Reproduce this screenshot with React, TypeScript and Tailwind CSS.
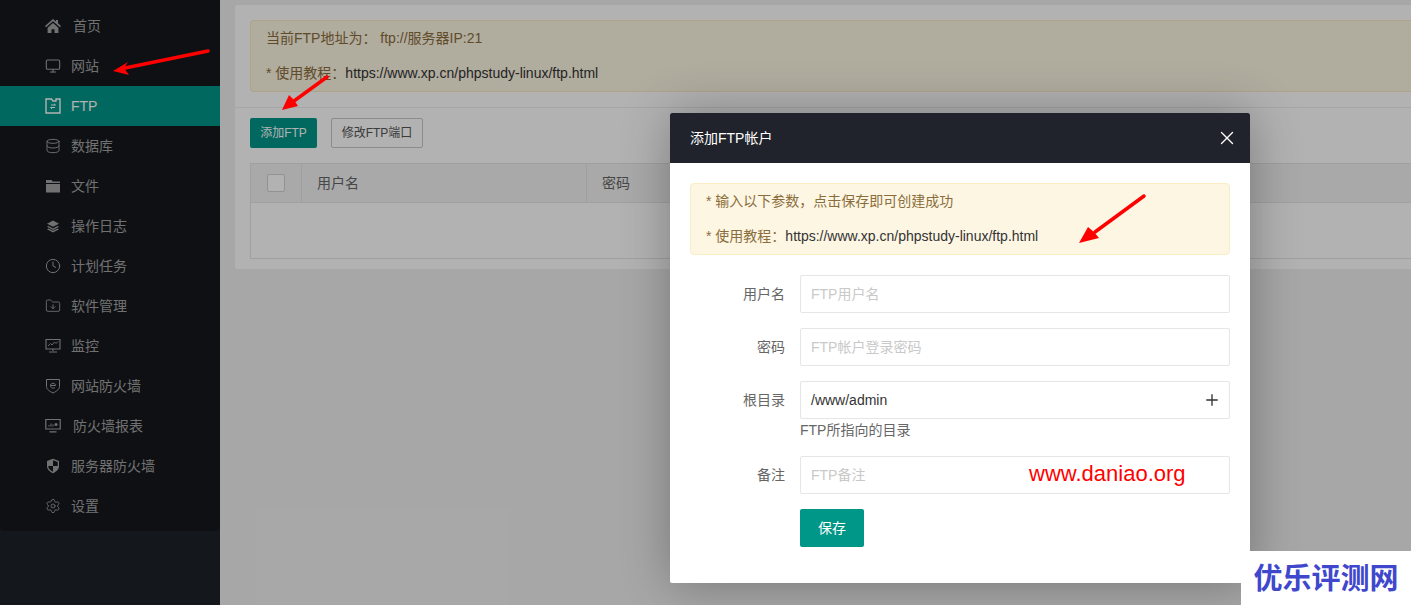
import { Clock, Database, FolderDown, Monitor, Plus, Settings, X } from "lucide-react";
import type { ReactNode } from "react";

const iconCls = "h-[16px] w-[16px]";

function HomeIcon() {
  return (
    <svg viewBox="0 0 16 16" className={iconCls} fill="currentColor">
      <path d="M8 1 0 8l1 1.200L8 3.200l7 6 1-1.200L13 5.300V2h-2v1.600zM2.600 9.800V15h3.900v-3.800h3V15h3.900V9.800L8 5z" />
    </svg>
  );
}

function FtpIcon() {
  return (
    <svg viewBox="0 0 16 16" className={iconCls} fill="none" stroke="currentColor" strokeWidth="1.400">
      <path d="M1 1h5.500l1.500 2h3V1h4v14H1z" />
      <path d="M6 7h4.500L9 5.800M10 9.500H5.500L7 10.800" strokeWidth="1" />
    </svg>
  );
}

function FolderIcon() {
  return (
    <svg viewBox="0 0 16 16" className={iconCls} fill="currentColor">
      <path d="M1 2h5.500l1.200 1.500H15v1.500H1zM1 6h14v8.500H1z" />
    </svg>
  );
}

function LayersIcon() {
  return (
    <svg viewBox="0 0 16 16" className={iconCls} fill="currentColor">
      <path d="M8 2.500 14 5.700 8 8.800 2 5.700zM3.400 8 8 10.400 12.600 8 14 8.800 8 12 2 8.800zM3.400 10.400 8 12.800l4.600-2.400 1.400 .8L8 14.400 2 11.200z" />
    </svg>
  );
}

function ChartIcon() {
  return (
    <svg viewBox="0 0 16 16" className={iconCls} fill="none" stroke="currentColor" strokeWidth="1.100">
      <path d="M1 1.500h14v9.500H1zM8 11v2M4 14h8" />
      <path d="M3 8l2.500-2.500 1.500 1.500 2.500-3 1.500 1.500 2-2" strokeWidth=".9" />
    </svg>
  );
}

function ShieldEIcon() {
  return (
    <svg viewBox="0 0 16 16" className={iconCls} fill="none" stroke="currentColor" strokeWidth="1">
      <path d="M1.500 1.500h13v7c0 3-3.500 5-6.500 6.500-3-1.500-6.500-3.500-6.500-6.500z" />
      <path d="M5.500 7.500h5c0-3-5-3-5 0s3 3 4.500 2" />
    </svg>
  );
}

function ReportIcon() {
  return (
    <svg viewBox="0 0 16 16" className={iconCls} fill="none" stroke="currentColor" strokeWidth="1.200">
      <path d="M.8 1.500h14.400v9.500H.8zM4.500 13.800h7" />
      <path d="M4 8.500V7M6 8.500V5.500M8 8.500V6.500" strokeWidth="1" />
      <circle cx="11" cy="6.500" r="1.500" fill="currentColor" stroke="none" />
    </svg>
  );
}

function ShieldHalfIcon() {
  return (
    <svg viewBox="0 0 16 16" className={iconCls} fill="currentColor">
      <path d="M8 .8 14 3v5.500c0 3-3 5.300-6 6.700-3-1.400-6-3.700-6-6.700V3zM8 2.300V8H3.300v.5c0 2.300 2.400 4.200 4.700 5.300V8h4.700V3.900z" />
    </svg>
  );
}

type NavItem = { label: string; icon: ReactNode; active?: boolean; shift?: boolean };

const navItems: NavItem[] = [
  { label: "首页", icon: <HomeIcon />, shift: true },
  { label: "网站", icon: <Monitor className={iconCls} strokeWidth={1.6} /> },
  { label: "FTP", icon: <FtpIcon />, active: true },
  { label: "数据库", icon: <Database className={iconCls} strokeWidth={1.4} /> },
  { label: "文件", icon: <FolderIcon /> },
  { label: "操作日志", icon: <LayersIcon /> },
  { label: "计划任务", icon: <Clock className={iconCls} strokeWidth={1.5} /> },
  { label: "软件管理", icon: <FolderDown className={iconCls} strokeWidth={1.3} /> },
  { label: "监控", icon: <ChartIcon /> },
  { label: "网站防火墙", icon: <ShieldEIcon /> },
  { label: "防火墙报表", icon: <ReportIcon />, shift: true },
  { label: "服务器防火墙", icon: <ShieldHalfIcon /> },
  { label: "设置", icon: <Settings className={iconCls} strokeWidth={1.3} /> },
];

function Field({ label, placeholder, value, suffix, hint, watermark }: {
  label: string;
  placeholder?: string;
  value?: string;
  suffix?: boolean;
  hint?: string;
  watermark?: boolean;
}) {
  return (
    <div className="flex">
      <div className="flex h-[38px] w-[95px] shrink-0 items-center justify-end text-[14px] text-[#666]">{label}</div>
      <div className="ml-[15px] flex-1">
        <div className="relative flex h-[38px] items-center justify-between rounded-[2px] border border-[#e6e6e6] pl-[10px] pr-[8px] text-[14px]">
          {value ? <span className="text-[#333]">{value}</span> : <span className="text-[#c9c9c9]">{placeholder}</span>}
          {suffix && <Plus className="h-[18px] w-[18px] text-[#333]" strokeWidth={1.8} />}
          {watermark && <span className="absolute left-[228px] top-[2px] text-[22px] leading-[30px] text-[#f00]">www.daniao.org</span>}
        </div>
        {hint && <div className="mt-[1px] h-[21px] text-[14px] leading-[21px] text-[#666]">{hint}</div>}
      </div>
    </div>
  );
}

export default function App() {
  return (
    <div className="relative flex h-[605px] w-[1411px] overflow-hidden font-['Liberation_Sans','Noto_Sans_CJK_SC',sans-serif]">
      <aside className="w-[220px] shrink-0 bg-[#1e2127]">
        <ul className="rounded-b-[4px] bg-[#16181d] pb-[5px] pt-[6px]">
          {navItems.map((item) => (
            <li
              key={item.label}
              className={`flex h-[40px] items-center pl-[45px] text-[14px] ${item.active ? "bg-[#009688] text-white" : "text-[#a3a3a3]"}`}
            >
              {item.icon}
              <span className={item.shift ? "ml-[12px]" : "ml-[10px]"}>{item.label}</span>
            </li>
          ))}
        </ul>
      </aside>

      <main className="flex-1 bg-[#f0f0f0] pl-[15px] pt-[5px]">
        <div className="h-[264px] rounded-l-[2px] bg-white">
          <div className="border-b border-[#eee] pl-[15px] pt-[15px]">
            <div className="mb-[15px] h-[72px] rounded-l-[4px] border border-r-0 border-[#faecc5] bg-[#fdf6e3] pl-[15px] text-[14px] leading-[35px] text-[#8a6d3b]">
              <div>当前FTP地址为： ftp://服务器IP:21</div>
              <div>* 使用教程：<span className="text-[#333]">https://www.xp.cn/phpstudy-linux/ftp.html</span></div>
            </div>
          </div>
          <div className="flex gap-[14px] px-[15px] pt-[10px]">
            <button className="h-[30px] w-[67px] rounded-[2px] bg-[#009688] text-[12px] text-white">添加FTP</button>
            <button className="h-[30px] w-[92px] rounded-[2px] border border-[#c9c9c9] text-[12px] text-[#555]">修改FTP端口</button>
          </div>
          <div className="ml-[15px] mt-[15px] h-[96px] border border-r-0 border-[#e6e6e6] text-[14px] text-[#666]">
            <div className="flex h-[39px] border-b border-[#e6e6e6] bg-[#f2f2f2]">
              <div className="flex w-[51px] items-center justify-center border-r border-[#e6e6e6]">
                <div className="h-[18px] w-[18px] rounded-[2px] border border-[#d2d2d2] bg-white" />
              </div>
              <div className="flex w-[285px] items-center border-r border-[#e6e6e6] pl-[15px]">用户名</div>
              <div className="flex items-center pl-[15px]">密码</div>
            </div>
          </div>
        </div>
      </main>

      <div className="absolute inset-0 bg-black/30" />

      <div className="absolute left-[670px] top-[113px] h-[470px] w-[580px] rounded-[2px] bg-white shadow-[1px_1px_50px_rgba(0,0,0,0.3)]">
        <div className="flex h-[50px] items-center justify-between rounded-t-[2px] bg-[#20232b] pl-[20px] pr-[12px] text-[14px] text-white">
          <span>添加FTP帐户</span>
          <X className="h-[22px] w-[22px]" strokeWidth={1.5} />
        </div>
        <div className="px-[20px] pt-[20px]">
          <div className="h-[72px] rounded-[4px] border border-[#faecc5] bg-[#fdf6e3] pl-[15px] text-[14px] leading-[35px] text-[#8a6d3b]">
            <div>* 输入以下参数，点击保存即可创建成功</div>
            <div>* 使用教程：<span className="text-[#333]">https://www.xp.cn/phpstudy-linux/ftp.html</span></div>
          </div>
          <div className="mt-[20px] flex flex-col gap-[15px]">
            <Field label="用户名" placeholder="FTP用户名" />
            <Field label="密码" placeholder="FTP帐户登录密码" />
            <Field label="根目录" value="/www/admin" suffix hint="FTP所指向的目录" />
            <Field label="备注" placeholder="FTP备注" watermark />
          </div>
          <button className="ml-[110px] mt-[15px] h-[38px] w-[64px] rounded-[2px] bg-[#009688] text-[14px] text-white">保存</button>
        </div>
      </div>

      {/* annotations on top of the screenshot */}
      <svg className="pointer-events-none absolute left-0 top-0 h-[605px] w-[1411px]" viewBox="0 0 1411 605">
        <g stroke="#f00" strokeWidth="3.500" strokeLinecap="round" fill="#f00">
          <path d="M208 51 125 68" />
          <path d="M327 77 294 101" />
          <path d="M1144 196 1095 232" />
        </g>
        <g fill="#f00">
          <path d="M113 71 128 62 124 68 129 75z" />
          <path d="M282 110 289 95 294 100 298 106z" />
          <path d="M1079 243 1088 227 1094 232 1099 238z" />
        </g>
      </svg>

      <div className="absolute bottom-0 right-0 flex h-[54px] w-[170px] items-center justify-center bg-white">
        <span className="mt-[2px] text-[29px] font-bold leading-none text-[#3f48cc]">优乐评测网</span>
      </div>
    </div>
  );
}
